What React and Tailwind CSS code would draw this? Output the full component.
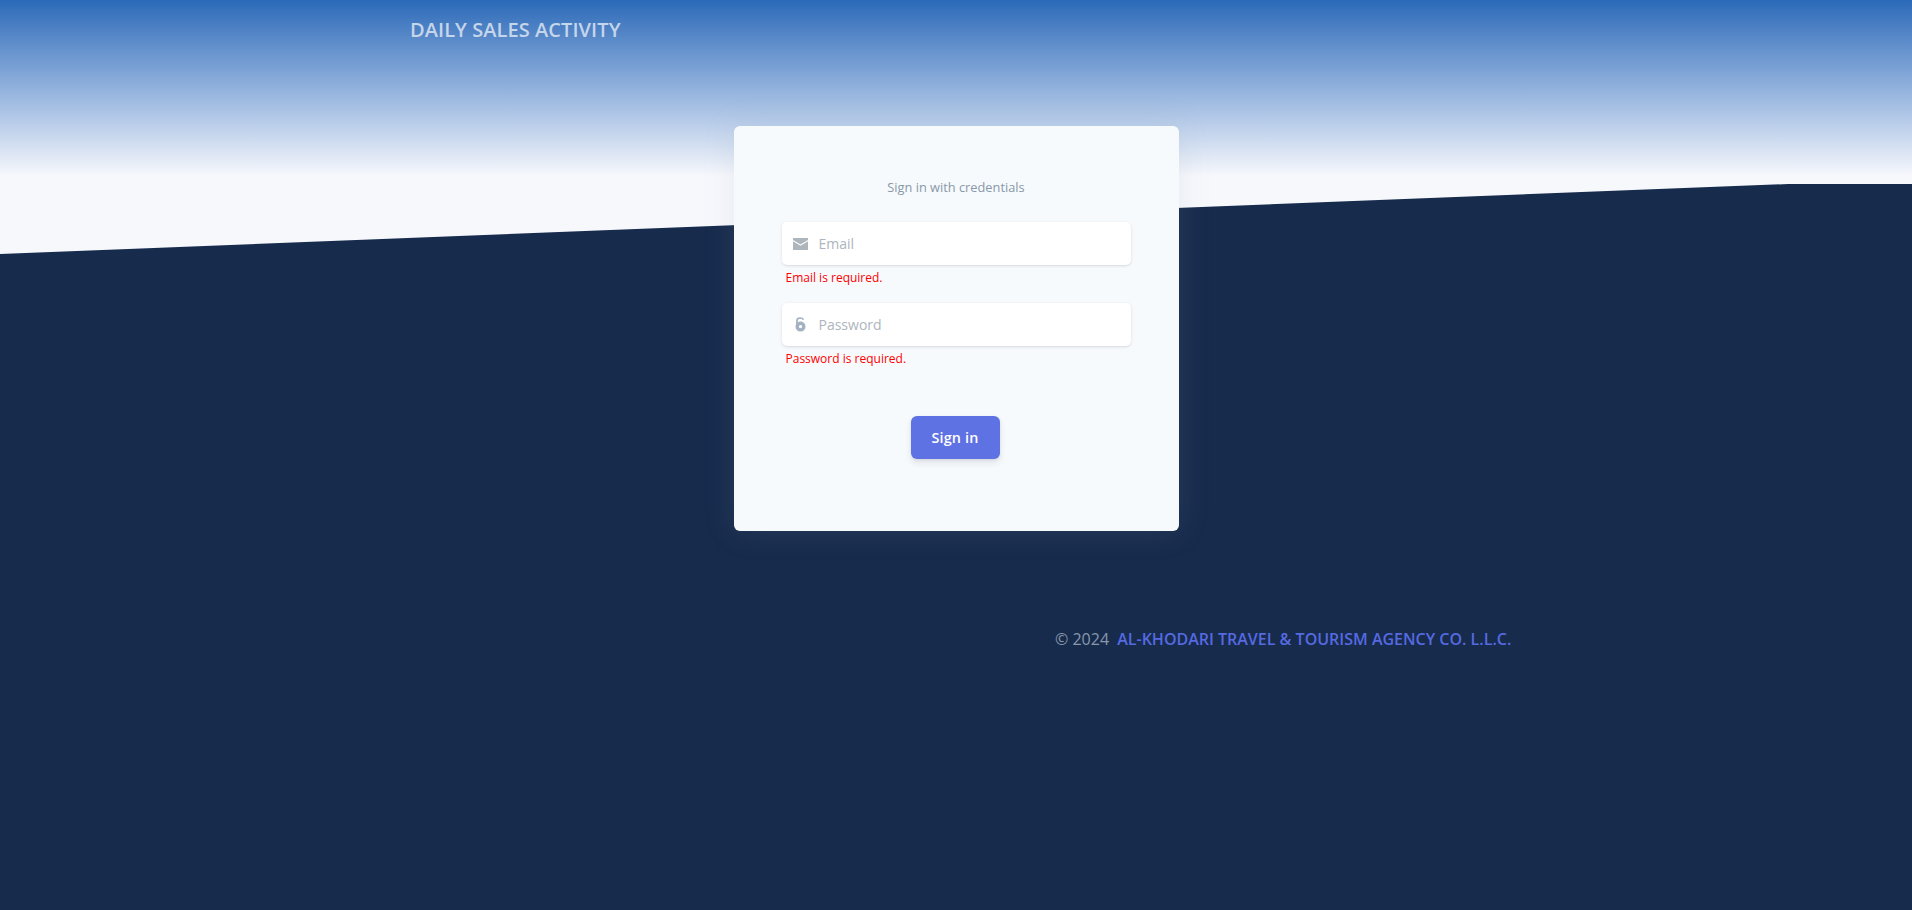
import React from "react";

const font = "font-['Open_Sans',sans-serif]";

// Envelope glyph, solid with a light fold line
const MailIcon = () => (
  <svg width="15" height="12" viewBox="0 0 15 12" className="block">
    <path d="M0 0H15V2L7.5 6.5L0 2Z" fill="#adb5bd" />
    <path d="M0 3.2L7.5 7.7L15 3.2V12H0Z" fill="#adb5bd" />
  </svg>
);

// Round padlock with an open shackle
const LockIcon = () => (
  <svg width="11" height="15" viewBox="0 0 11 15" className="block">
    <path
      d="M2 7V3.4C2 1.9 3.4 1 5.2 1C6.8 1 8 1.7 8.4 2.8"
      fill="none"
      stroke="#a3b1c2"
      strokeWidth="1.7"
    />
    <path
      fillRule="evenodd"
      d="M5.5 4.6A5 5 0 1 1 5.5 14.6A5 5 0 1 1 5.5 4.6ZM5.5 8A1.6 1.6 0 1 0 5.5 11.2A1.6 1.6 0 1 0 5.5 8Z"
      fill="#a3b1c2"
    />
  </svg>
);

const Field = ({ icon, placeholder, type, error }) => (
  <div>
    <div className="flex h-[43px] items-center rounded-[5px] bg-white shadow-[0_1px_3px_rgba(50,50,93,0.15),0_1px_0_rgba(0,0,0,0.02)]">
      <span className="flex w-[37px] shrink-0 justify-center">{icon}</span>
      <input
        type={type}
        placeholder={placeholder}
        className="w-full bg-transparent text-[14px] text-[#525f7f] outline-none placeholder:text-[#adb5bd]"
      />
    </div>
    <div className="mt-[3px] h-[19px] pl-[4px] text-[12px] leading-[19px] text-[#ff0000]">
      {error}
    </div>
  </div>
);

export default function App() {
  return (
    <div className={`relative flex min-h-screen flex-col overflow-hidden bg-[#172b4d] ${font}`}>
      {/* Header background with the slanted edge */}
      <div className="absolute inset-x-0 top-0 h-[255px] bg-[#f7f8fc]">
        <div className="h-[176px] bg-gradient-to-b from-[#2a6ab8] to-[#f7f8fc]" />
        <svg
          className="absolute inset-0 h-full w-full"
          viewBox="0 0 1912 255"
          preserveAspectRatio="none"
        >
          <polygon points="0,254 1788,184 1912,184 1912,255 0,255" fill="#172b4d" />
        </svg>
      </div>

      <div className="relative flex h-[126px] items-start pl-[410px] pt-[16px]">
        <h1 className="text-[20px] leading-[27px] font-semibold tracking-[0.06px] text-[#c5d5ea]">
          DAILY SALES ACTIVITY
        </h1>
      </div>

      <main className="relative flex justify-center">
        <div className="h-[405px] w-[445px] rounded-[6px] bg-[#f7fafc] px-[48px] pt-[52px] shadow-[0_0_32px_rgba(136,152,170,0.15)]">
          <p className="text-center text-[12.8px] leading-[19px] text-[#8898aa]">
            Sign in with credentials
          </p>
          <form className="mt-[25px] flex flex-col gap-[16px]">
            <Field
              icon={<MailIcon />}
              placeholder="Email"
              type="email"
              error="Email is required."
            />
            <Field
              icon={<LockIcon />}
              placeholder="Password"
              type="password"
              error="Password is required."
            />
            <div className="mt-[32px] flex justify-center pr-[2px]">
              <button
                type="button"
                className="h-[43px] w-[89px] rounded-[6px] bg-[#5e72e4] text-[14.4px] font-semibold tracking-[0.15px] text-white shadow-[0_4px_6px_rgba(50,50,93,0.11),0_1px_3px_rgba(0,0,0,0.08)]"
              >
                Sign in
              </button>
            </div>
          </form>
        </div>
      </main>

      <footer className="relative mt-[96px] pl-[1055px] text-[16px] leading-[24px] whitespace-pre">
        <span className="text-[#8898aa]">© 2024 </span>
        <a href="#" className="ml-[4px] font-semibold text-[#566ae0]">
          AL-KHODARI TRAVEL &amp; TOURISM AGENCY CO. L.L.C.
        </a>
      </footer>
    </div>
  );
}
